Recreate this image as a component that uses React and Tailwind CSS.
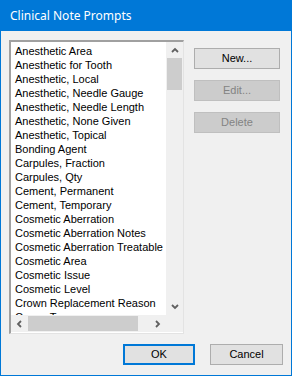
import React from "react";

const items = [
  "Anesthetic Area",
  "Anesthetic for Tooth",
  "Anesthetic, Local",
  "Anesthetic, Needle Gauge",
  "Anesthetic, Needle Length",
  "Anesthetic, None Given",
  "Anesthetic, Topical",
  "Bonding Agent",
  "Carpules, Fraction",
  "Carpules, Qty",
  "Cement, Permanent",
  "Cement, Temporary",
  "Cosmetic Aberration",
  "Cosmetic Aberration Notes",
  "Cosmetic Aberration Treatable",
  "Cosmetic Area",
  "Cosmetic Issue",
  "Cosmetic Level",
  "Crown Replacement Reason",
  "Crown Type",
];

const sans = { fontFamily: '"Liberation Sans", Arial, sans-serif' };

function Chevron({ dir }) {
  const paths = {
    up: "M1 5 L4 2 L7 5",
    down: "M1 2 L4 5 L7 2",
    left: "M5 1 L2 4 L5 7",
    right: "M2 1 L5 4 L2 7",
  };
  const vertical = dir === "up" || dir === "down";
  return (
    <svg width={vertical ? 8 : 7} height={vertical ? 7 : 8} viewBox={vertical ? "0 0 8 7" : "0 0 7 8"}>
      <path d={paths[dir]} fill="none" stroke="#606060" strokeWidth="1.8" />
    </svg>
  );
}

function Btn({ children, disabled, def, w = "w-[86px]" }) {
  return (
    <div
      className={`${w} h-[21px] flex items-center justify-center text-[11px] ${
        def
          ? "border-2 border-[#0078d7] bg-[#e1e1e1] text-black"
          : disabled
          ? "border border-[#bfbfbf] bg-[#cccccc] text-[#838383]"
          : "border border-[#adadad] bg-[#e1e1e1] text-black"
      }`}
      style={sans}
    >
      {children}
    </div>
  );
}

export default function App() {
  return (
    <div className="w-[292px] h-[376px] border border-[#0078d7] bg-[#f0f0f0] flex flex-col overflow-hidden">
      <div
        className="h-[30px] bg-[#0078d7] text-white text-[12px] flex items-center pl-[9px] shrink-0"
        style={{ fontFamily: '"Noto Sans", "Open Sans", sans-serif' }}
      >
        Clinical Note Prompts
      </div>
      <div className="flex pl-[8px] pt-[9px]">
        <div className="w-[175px] h-[294px] border-t-2 border-l-2 border-t-[#a0a0a0] border-l-[#a0a0a0] border-b border-r border-b-[#e3e3e3] border-r-[#e3e3e3] flex flex-col bg-white">
          <div className="flex h-[273px]">
            <div
              className="w-[155px] overflow-hidden pl-[4px] pt-[2px] text-[11px] leading-[14px] text-black whitespace-nowrap"
              style={sans}
            >
              {items.map((t) => (
                <div key={t} className="h-[14px]">
                  {t}
                </div>
              ))}
            </div>
            <div className="w-[17px] bg-[#f0f0f0] flex flex-col">
              <div className="h-[16px] flex items-center justify-center">
                <Chevron dir="up" />
              </div>
              <div className="h-[32px] mx-[1px] bg-[#cdcdcd]" />
              <div className="flex-1" />
              <div className="h-[17px] flex items-center justify-center">
                <Chevron dir="down" />
              </div>
            </div>
          </div>
          <div className="flex h-[17px] bg-[#f0f0f0]">
            <div className="w-[17px] flex items-center justify-center">
              <Chevron dir="left" />
            </div>
            <div className="w-[110px] my-[1px] bg-[#cdcdcd]" />
            <div className="flex-1" />
            <div className="w-[17px] flex items-center justify-center">
              <Chevron dir="right" />
            </div>
            <div className="w-[17px] bg-[#f0f0f0]" />
          </div>
        </div>
        <div className="ml-[10px] pt-[8px] flex flex-col gap-[11px]">
          <Btn>New...</Btn>
          <Btn disabled>Edit...</Btn>
          <Btn disabled>Delete</Btn>
        </div>
      </div>
      <div className="flex pl-[122px] pt-[10px] gap-[15px]">
        <Btn def w="w-[72px]">OK</Btn>
        <Btn w="w-[73px]">Cancel</Btn>
      </div>
    </div>
  );
}
